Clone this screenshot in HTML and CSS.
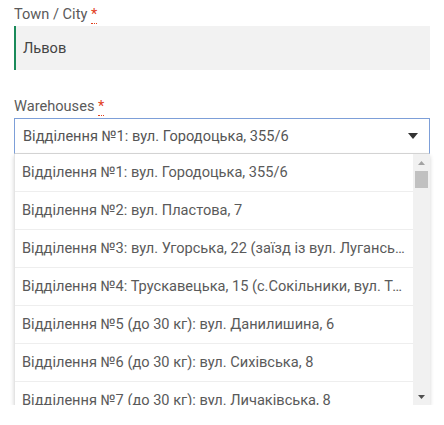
FILE: index.html
```html
<!DOCTYPE html>
<html lang="uk">
<head>
<meta charset="utf-8">
<link rel="stylesheet" href="styles.css">
</head>
<body>
<div class="form">
  <div class="field">
    <label class="label">Town / City <abbr class="req" title="required">*</abbr></label>
    <div class="input">Львов</div>
  </div>
  <div class="field field-second">
    <label class="label">Warehouses <abbr class="req" title="required">*</abbr></label>
    <div class="select">
      <span class="select-text">Відділення №1: вул. Городоцька, 355/6</span>
      <svg class="caret" width="10" height="6" viewBox="0 0 10 6"><path d="M0 0H10L5 6Z" fill="#333"/></svg>
    </div>
    <div class="dropdown">
      <ul class="options">
        <li class="option">Відділення №1: вул. Городоцька, 355/6</li>
        <li class="option">Відділення №2: вул. Пластова, 7</li>
        <li class="option">Відділення №3: вул. Угорська, 22 (заїзд із вул. Луганської)</li>
        <li class="option">Відділення №4: Трускавецька, 15 (с.Сокільники, вул. Трускавецька)</li>
        <li class="option">Відділення №5 (до 30 кг): вул. Данилишина, 6</li>
        <li class="option">Відділення №6 (до 30 кг): вул. Сихівська, 8</li>
        <li class="option">Відділення №7 (до 30 кг): вул. Личаківська, 8</li>
      </ul>
      <div class="scrollbar">
        <div class="sb-btn"><svg width="7" height="4" viewBox="0 0 7 4"><path d="M0 4H7L3.5 0Z" fill="#a3a3a3"/></svg></div>
        <div class="sb-track"><div class="sb-thumb"></div></div>
        <div class="sb-btn"><svg width="7" height="4" viewBox="0 0 7 4"><path d="M0 0H7L3.5 4Z" fill="#505050"/></svg></div>
      </div>
    </div>
  </div>
</div>
</body>
</html>
```
FILE: styles.css
```css
* { box-sizing: border-box; }
html, body { margin: 0; padding: 0; background: #fff; }
body {
  font-family: Roboto, "Noto Sans", sans-serif;
  font-size: 14.6px;
  color: #555;
}
.form { padding: 4px 14px 0 14px; }
.field { display: flex; flex-direction: column; }
.field-second { margin-top: 26px; }
.label {
  line-height: 20px;
  margin-bottom: 2px;
  color: #5a5a5a;
}
.req {
  color: #e2401c;
  text-decoration: none;
  border-bottom: 1px dotted #e2401c;
  cursor: help;
}
.input {
  height: 44px;
  background: #f2f2f2;
  border-left: 2px solid #1a8a5a;
  padding-left: 7px;
  display: flex;
  align-items: center;
  color: #444;
}
.select {
  height: 36px;
  border: 1px solid #7d9fd8;
  border-bottom-color: #d8d8d8;
  display: flex;
  align-items: center;
  justify-content: space-between;
  padding: 0 11px 0 8px;
  color: #555;
}
.caret { display: block; }
.dropdown {
  height: 251px;
  display: flex;
  background: #fff;
  border-left: 1px solid #e4e4e4;
  box-shadow: 0 2px 4px rgba(0,0,0,0.18);
  overflow: hidden;
}
.options {
  list-style: none;
  margin: 0;
  padding: 0;
  flex: 1;
  min-width: 0;
}
.option {
  height: 38px;
  line-height: 37px;
  padding: 0 7px;
  border-bottom: 1px solid #eeeeee;
  white-space: nowrap;
  overflow: hidden;
  text-overflow: ellipsis;
  color: #5a5a5a;
}
.scrollbar {
  width: 17px;
  background: #f1f1f1;
  display: flex;
  flex-direction: column;
}
.sb-btn {
  height: 17px;
  display: flex;
  align-items: center;
  justify-content: center;
}
.sb-btn svg { display: block; }
.sb-track { flex: 1; padding: 0 2px; }
.sb-thumb { height: 17px; background: #c1c1c1; }
```
